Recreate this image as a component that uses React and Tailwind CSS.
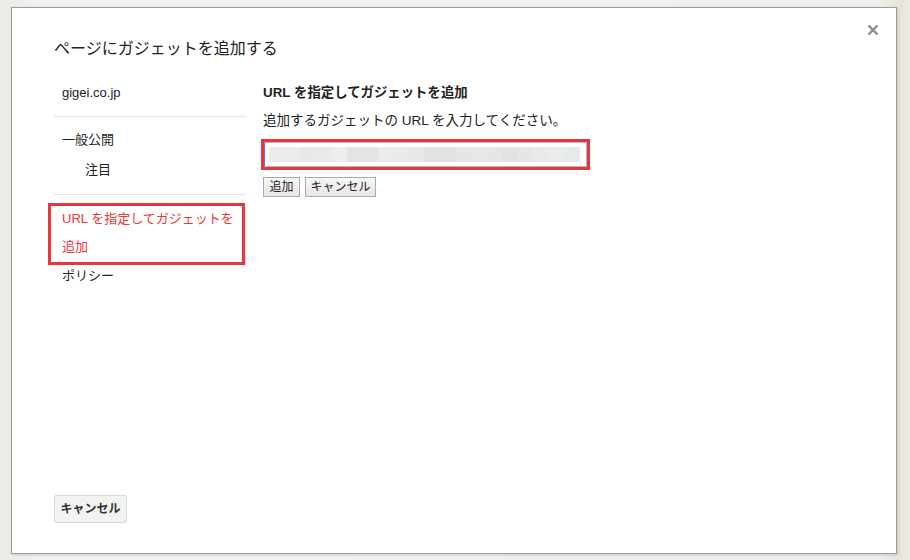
export default function App() {
  const blocks = ["#ececec","#ebebeb","#e9e8e6","#e8e9ea","#ededed","#e3e4e3","#e4e4e4","#ebebeb","#eaeae8","#e8e8e8","#e2e2e2","#e0e2e3","#e6e6e6","#e7e7e7","#e6e6e6","#e3e3e3","#e6e6e6","#e9e9e9","#ebebeb","#e7eaea"];
  return (
    <div className="w-[910px] h-[560px] bg-[linear-gradient(to_right,#eceae6_0px,#f2f1ee_40px,#f0efec_880px,#e8e4dc_900px,#efebe4_910px)] pt-[7px] pl-[11px] overflow-hidden" style={{fontFamily: '"Liberation Sans", "Noto Sans CJK JP", sans-serif'}}>
      <div className="relative w-[886px] h-[547px] bg-white border border-[#9b9b9b] shadow-[1px_1px_3px_rgba(0,0,0,0.15)] flex flex-col px-[42px]">
        <div className="absolute top-[15px] right-[16px] w-[14px] h-[14px]">
          <svg viewBox="0 0 14 14" width="14" height="14">
            <path d="M2.5 2.5 L11.5 11.5 M11.5 2.5 L2.5 11.5" stroke="#8c8c8c" strokeWidth="2.4" />
          </svg>
        </div>
        <div className="pt-[31px] h-[51px] text-[16px] leading-[20px] text-[#222]">ページにガジェットを追加する</div>
        <div className="flex mt-[19px] gap-[17px]">
          <div className="w-[192px] flex flex-col text-[13px] text-[#222]">
            <div className="h-[30px] leading-[30px] px-[8px]">gigei.co.jp</div>
            <div className="my-[8px] h-px bg-[#e5e5e5]"></div>
            <div className="h-[30px] leading-[30px] px-[8px]">一般公開</div>
            <div className="h-[30px] leading-[30px] pl-[31px]">注目</div>
            <div className="mt-[9px] mb-[8px] h-px bg-[#e5e5e5]"></div>
            <div className="-ml-[6px] w-[197px] h-[62px] border-[3px] border-[#e8373c] pl-[11px] text-[#e8383a] leading-[28px]">
              <div className="-mt-px">URL を指定してガジェットを</div>
              <div>追加</div>
            </div>
            <div className="h-[22px] leading-[22px] px-[8px]">ポリシー</div>
          </div>
          <div className="flex flex-col">
            <div className="h-[30px] leading-[30px] text-[13.4px] font-bold text-[#222]">URL を指定してガジェットを追加</div>
            <div className="h-[26px] leading-[26px] text-[13.5px] text-[#222]">追加するガジェットの URL を入力してください。</div>
            <div className="mt-[5px] -ml-[2px] w-[329px] h-[31px] border-[3px] border-[#e8373c]">
              <div className="h-full border border-[#b8b8b8] border-l-[#4a7de0] flex items-center pl-[4px] pr-[6px]">
                <div className="flex flex-1 h-[15px]">
                  {blocks.map((c, i) => (
                    <div key={i} className="flex-1 h-full" style={{backgroundColor: c}}></div>
                  ))}
                </div>
              </div>
            </div>
            <div className="flex gap-[5px] mt-[7px] text-[12px] text-[#222]">
              <div className="w-[37px] h-[20px] leading-[18px] text-center border border-[#a9a9a9] bg-gradient-to-b from-[#f7f7f7] to-[#e6e6e6]">追加</div>
              <div className="w-[71px] h-[20px] leading-[18px] text-center border border-[#a9a9a9] bg-gradient-to-b from-[#f7f7f7] to-[#e6e6e6]">キャンセル</div>
            </div>
          </div>
        </div>
        <div className="mt-auto mb-[30px] w-[73px] h-[28px] leading-[26px] text-center text-[12px] font-bold text-[#333] bg-[#f2f2f2] border border-[#d9d9d9] rounded-[2px]">キャンセル</div>
      </div>
    </div>
  );
}
